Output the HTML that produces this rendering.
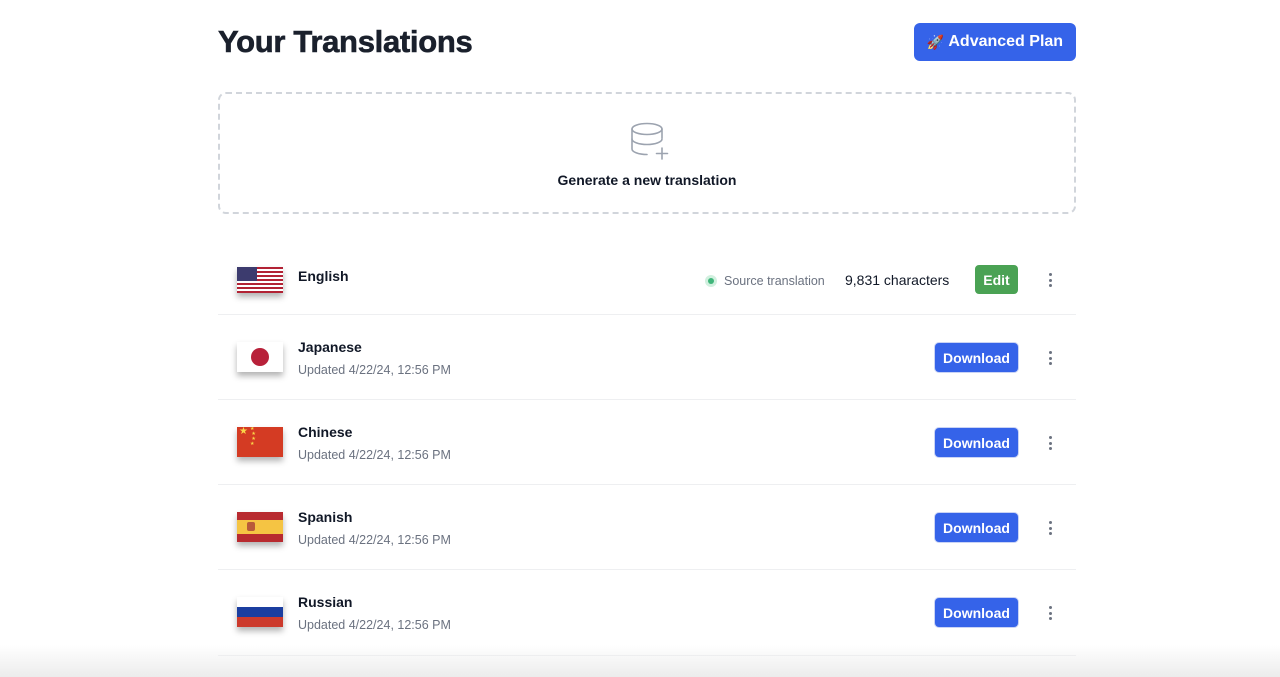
<!DOCTYPE html>
<html><head><meta charset="utf-8"><style>
*{box-sizing:border-box;margin:0;padding:0}
body{width:1280px;height:677px;overflow:hidden;background:#fff;font-family:"Liberation Sans",sans-serif;color:#111827;position:relative}
.abs{position:absolute}
h1{position:absolute;left:218px;top:24px;font-size:31px;font-weight:700;letter-spacing:-0.3px;color:#1a202c;-webkit-text-stroke:0.6px #1a202c}
.plan{left:914px;top:23px;width:162px;height:38px;background:#3563e9;border-radius:6px;color:#fff;font-weight:700;font-size:16px;display:flex;align-items:center;justify-content:center;gap:4px}
.box{left:218px;top:92px;width:858px;height:122px;border:2px dashed #d1d5db;border-radius:8px}
.gen{left:218px;width:858px;top:172px;text-align:center;font-size:14px;font-weight:700}
.row{left:218px;width:858px;border-bottom:1px solid #eeeff1}
.flag{position:absolute;left:19px;width:46px;box-shadow:0 4px 6px rgba(0,0,0,.3);overflow:hidden}
.name{position:absolute;left:80px;font-size:14px;font-weight:700}
.upd{position:absolute;left:80px;font-size:12.5px;color:#6b7280}
.dl{position:absolute;left:717px;width:83px;height:29px;background:#3563e9;border-radius:4px;color:#fff;font-size:14px;font-weight:700;display:flex;align-items:center;justify-content:center;box-shadow:0 0 0 1px #c9d3f5}
.dots{position:absolute;left:831px;width:4px}
.dots i{display:block;width:3px;height:3px;border-radius:50%;background:#6b7280;margin-bottom:2.5px}
.fade{left:0;top:645px;width:1280px;height:32px;background:linear-gradient(#fff0,#ececec)}
</style></head><body>
<h1>Your Translations</h1>
<div class="abs plan"><span style="font-size:14px">🚀</span>Advanced Plan</div>
<div class="abs box"></div>
<svg class="abs" style="left:628px;top:121px" width="44" height="42" viewBox="0 0 44 42" fill="none" stroke="#9ca3af" stroke-width="1.6" stroke-linecap="round">
<ellipse cx="19" cy="8" rx="15" ry="5.5"/><path d="M4 8v20c0 3 6.7 5.5 15 5.5"/><path d="M34 8v9"/><path d="M4 18c0 3 6.7 5.5 15 5.5s15-2.5 15-5.5"/><path d="M34 27v11M28.5 32.5h11"/></svg>
<div class="abs gen">Generate a new translation</div>

<div class="abs row" style="top:250px;height:65px">
 <div class="flag" style="top:17px;height:26px">
  <svg width="46" height="26" viewBox="0 0 46 26"><rect width="46" height="26" fill="#fff"/><g fill="#b22234"><rect y="0" width="46" height="2"/><rect y="4" width="46" height="2"/><rect y="8" width="46" height="2"/><rect y="12" width="46" height="2"/><rect y="16" width="46" height="2"/><rect y="20" width="46" height="2"/><rect y="24" width="46" height="2"/></g><rect width="20" height="14" fill="#3c3b6e"/></svg>
 </div>
 <div class="name" style="top:18px">English</div>
 <div class="abs" style="left:487px;top:25px;width:12px;height:12px;border-radius:50%;background:#d1f0df"></div>
 <div class="abs" style="left:490px;top:28px;width:6px;height:6px;border-radius:50%;background:#3fb57a"></div>
 <div class="abs" style="left:506px;top:24px;font-size:12.5px;color:#6b7280">Source translation</div>
 <div class="abs" style="left:627px;top:22px;font-size:14px">9,831 characters</div>
 <div class="abs" style="left:757px;top:15px;width:43px;height:29px;background:#4aa254;border-radius:4px;color:#fff;font-weight:700;font-size:14px;display:flex;align-items:center;justify-content:center">Edit</div>
 <div class="dots" style="top:23px"><i></i><i></i><i></i></div>
</div>

<div class="abs row" style="top:315px;height:85px">
 <div class="flag" style="top:27px;height:30px;background:#fff"><div class="abs" style="left:14px;top:6px;width:18px;height:18px;border-radius:50%;background:#b8213a"></div></div>
 <div class="name" style="top:24px">Japanese</div><div class="upd" style="top:48px">Updated 4/22/24, 12:56 PM</div>
 <div class="dl" style="top:28px">Download</div><div class="dots" style="top:36px"><i></i><i></i><i></i></div>
</div>
<div class="abs row" style="top:400px;height:85px">
 <div class="flag" style="top:27px;height:30px;background:#d43b23"><span class="abs" style="left:2px;top:-1px;color:#f9d648;font-size:10px">★</span><span class="abs" style="left:13px;top:0;color:#f9d648;font-size:5px;line-height:5px">★<br>&nbsp;★<br>&nbsp;★<br>★</span></div>
 <div class="name" style="top:24px">Chinese</div><div class="upd" style="top:48px">Updated 4/22/24, 12:56 PM</div>
 <div class="dl" style="top:28px">Download</div><div class="dots" style="top:36px"><i></i><i></i><i></i></div>
</div>
<div class="abs row" style="top:485px;height:85px">
 <div class="flag" style="top:27px;height:30px;background:linear-gradient(#b82a2f 0 8px,#f5c443 8px 22px,#b82a2f 22px)"><div class="abs" style="left:10px;top:10px;width:8px;height:9px;background:#b85a3a;border-radius:2px"></div></div>
 <div class="name" style="top:24px">Spanish</div><div class="upd" style="top:48px">Updated 4/22/24, 12:56 PM</div>
 <div class="dl" style="top:28px">Download</div><div class="dots" style="top:36px"><i></i><i></i><i></i></div>
</div>
<div class="abs row" style="top:570px;height:86px">
 <div class="flag" style="top:27px;height:30px;background:linear-gradient(#fff 0 10px,#1b3ea0 10px 20px,#cc3a2c 20px)"></div>
 <div class="name" style="top:24px">Russian</div><div class="upd" style="top:48px">Updated 4/22/24, 12:56 PM</div>
 <div class="dl" style="top:28px">Download</div><div class="dots" style="top:36px"><i></i><i></i><i></i></div>
</div>
<div class="abs fade"></div>
</body></html>
